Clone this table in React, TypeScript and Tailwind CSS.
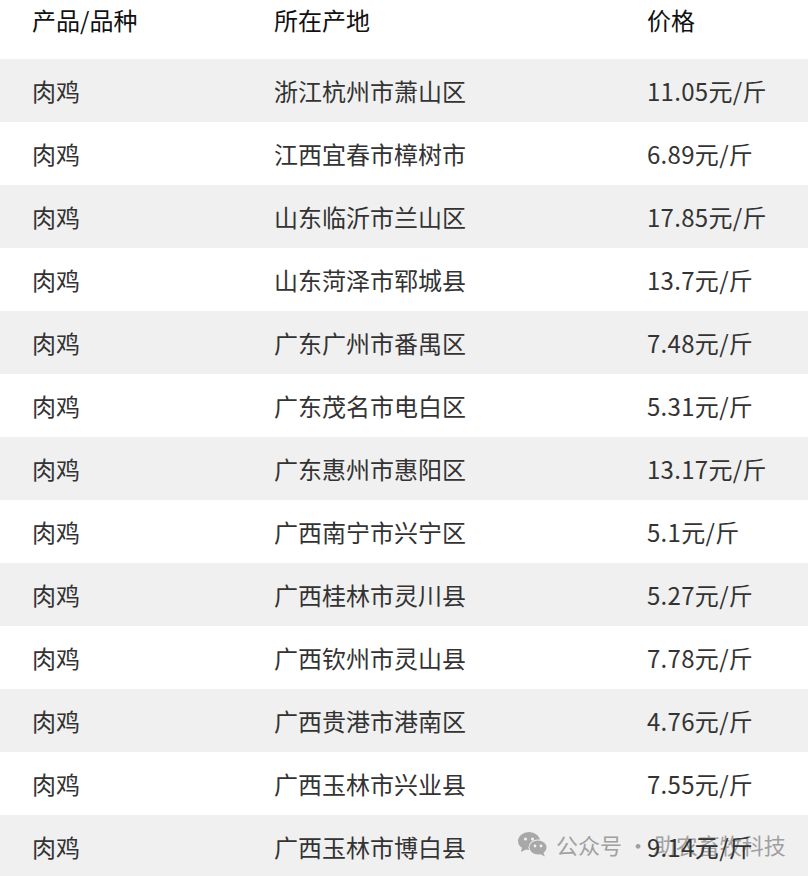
import React from "react";

const rows: [string, string, string][] = [
  ["肉鸡", "浙江杭州市萧山区", "11.05元/斤"],
  ["肉鸡", "江西宜春市樟树市", "6.89元/斤"],
  ["肉鸡", "山东临沂市兰山区", "17.85元/斤"],
  ["肉鸡", "山东菏泽市郓城县", "13.7元/斤"],
  ["肉鸡", "广东广州市番禺区", "7.48元/斤"],
  ["肉鸡", "广东茂名市电白区", "5.31元/斤"],
  ["肉鸡", "广东惠州市惠阳区", "13.17元/斤"],
  ["肉鸡", "广西南宁市兴宁区", "5.1元/斤"],
  ["肉鸡", "广西桂林市灵川县", "5.27元/斤"],
  ["肉鸡", "广西钦州市灵山县", "7.78元/斤"],
  ["肉鸡", "广西贵港市港南区", "4.76元/斤"],
  ["肉鸡", "广西玉林市兴业县", "7.55元/斤"],
  ["肉鸡", "广西玉林市博白县", "9.14元/斤"],
];

function WeChatIcon() {
  return (
    <svg width="30" height="26" viewBox="0 0 30 26">
      <ellipse cx="11" cy="10" rx="11" ry="9" fill="#a8a8a8" />
      <path d="M4 16 L3 21 L9 18 Z" fill="#a8a8a8" />
      <circle cx="7.5" cy="8" r="1.6" fill="#f0f0f0" />
      <circle cx="14.5" cy="8" r="1.6" fill="#f0f0f0" />
      <ellipse cx="20" cy="16.5" rx="9.5" ry="8" fill="#f0f0f0" />
      <ellipse cx="20" cy="16.5" rx="8.5" ry="7" fill="#a8a8a8" />
      <path d="M25 21 L27 25.5 L22 23 Z" fill="#a8a8a8" />
      <circle cx="17" cy="15" r="1.4" fill="#f0f0f0" />
      <circle cx="23" cy="15" r="1.4" fill="#f0f0f0" />
    </svg>
  );
}

export default function App() {
  return (
    <div
      className="relative w-[808px] h-[876px] overflow-hidden bg-white text-[24px] leading-none"
      style={{ fontFamily: '"Noto Sans CJK SC", "Noto Sans", sans-serif' }}
    >
      <div className="grid grid-cols-[242px_373px_1fr] pl-[32px] h-[59px] pt-[8px] text-[#111]">
        <div>产品/品种</div>
        <div>所在产地</div>
        <div>价格</div>
      </div>
      {rows.map((r, i) => (
        <div
          key={i}
          className={
            "grid grid-cols-[242px_373px_1fr] pl-[32px] h-[63px] items-center text-[#333] " +
            (i % 2 === 0 ? "bg-[#f0f0f0]" : "bg-white")
          }
        >
          <div className="relative z-10">{r[0]}</div>
          <div className="relative z-10">{r[1]}</div>
          <div className="relative z-10 tracking-[0.3px]">{r[2]}</div>
        </div>
      ))}
      <div className="absolute z-0 left-[518px] top-[831px] flex items-center gap-[8px] text-[#a0a0a0] text-[22px]">
        <WeChatIcon />
        <span>公众号 · 助农畜牧科技</span>
      </div>
    </div>
  );
}
